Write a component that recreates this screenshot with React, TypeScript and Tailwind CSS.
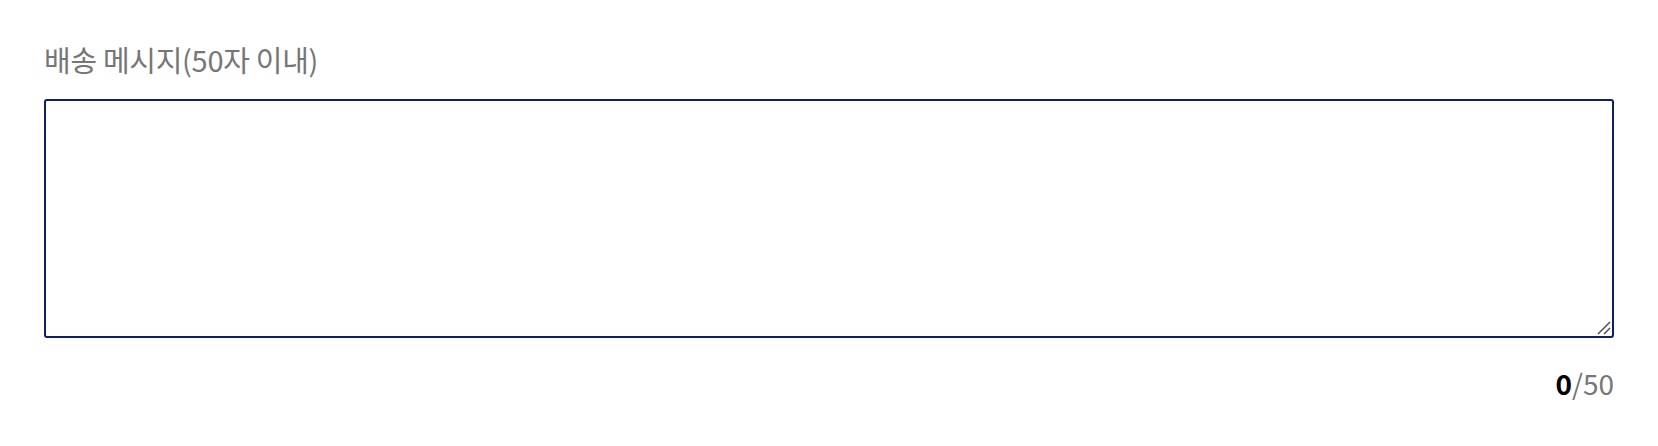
import React, { useState } from 'react';

export default function App() {
  const [message, setMessage] = useState('');

  return (
    <div className="min-h-screen bg-white px-[44px] pt-[39px] font-['Noto_Sans_CJK_KR','Noto_Sans',sans-serif]">
      <label htmlFor="delivery-message" className="block text-[29px] leading-[40px] text-[#767676] tracking-[-0.3px]">
        배송 메시지(50자 이내)
      </label>
      <div className="relative mt-[20px]">
        <textarea
          id="delivery-message"
          value={message}
          maxLength={50}
          onChange={(e) => setMessage(e.target.value)}
          className="block h-[239px] w-full resize-none rounded-[3px] border-2 border-[#0b1f6b] bg-white p-3 text-[22px] outline-none"
        />
        {/* resize grip */}
        <svg
          className="pointer-events-none absolute bottom-[3px] right-[3px] h-[14px] w-[14px]"
          viewBox="0 0 14 14"
          fill="none"
          stroke="#4a4a4a"
          strokeWidth="1.4"
        >
          <line x1="1" y1="13" x2="13" y2="1" />
          <line x1="7" y1="13" x2="13" y2="7" />
        </svg>
      </div>
      <div className="mt-[25px] text-right text-[28px] leading-[41px] text-[#767676]">
        <span className="font-bold text-black">{message.length}</span>/50
      </div>
    </div>
  );
}
